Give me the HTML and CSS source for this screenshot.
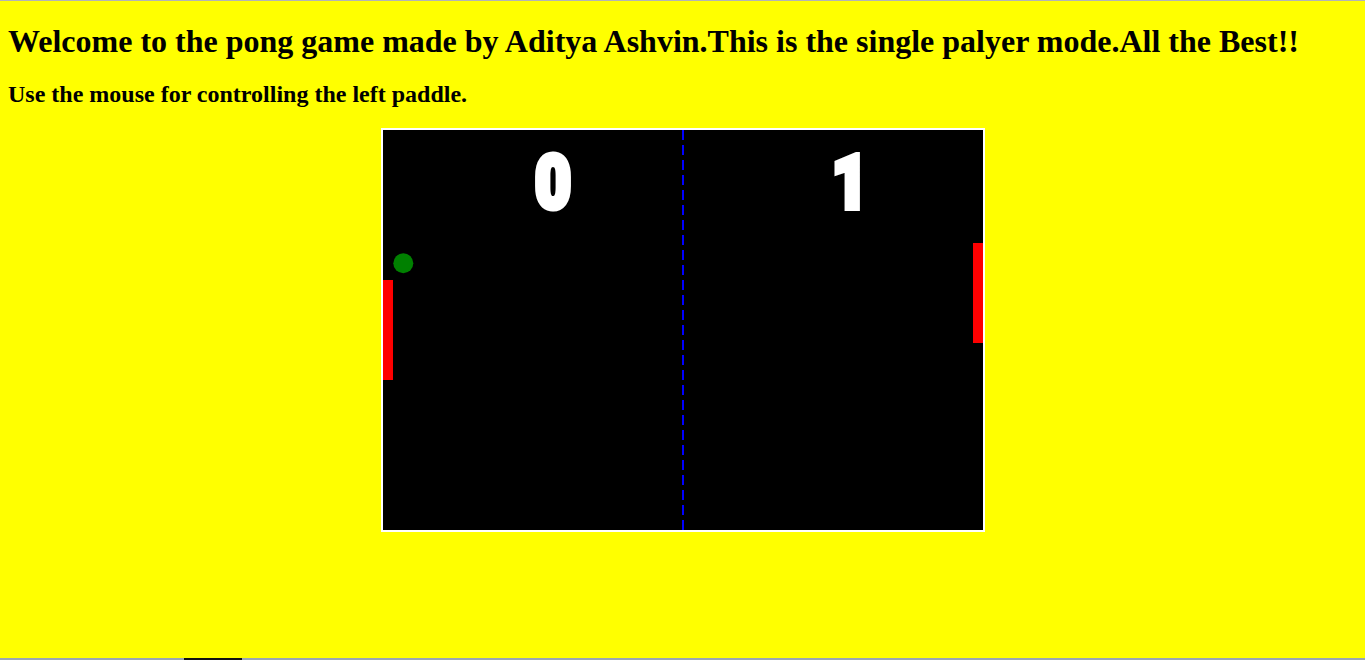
FILE: index.html
```html
<!DOCTYPE html>
<html>
<head>
<meta charset="utf-8">
<title>Pong</title>
<link rel="stylesheet" href="styles.css">
</head>
<body>
<h1 class="title">Welcome to the pong game made by Aditya Ashvin.This is the single palyer mode.All the Best!!</h1>
<h2 class="subtitle">Use the mouse for controlling the left paddle.</h2>
<div class="board">
  <svg class="court" width="600" height="400" viewBox="0 0 600 400">
    <rect x="0" y="0" width="600" height="400" fill="#000"/>
    <line x1="300" y1="0" x2="300" y2="400" stroke="#0000ff" stroke-width="2" stroke-dasharray="10 5"/>
    <g class="score">
      <text transform="translate(152 78) scale(0.84 1)">0</text>
      <text transform="translate(449 78) scale(0.84 1)">1</text>
    </g>
    <rect x="0" y="150" width="10" height="100" fill="#ff0000"/>
    <rect x="590" y="113" width="10" height="100" fill="#ff0000"/>
    <circle cx="20.3" cy="133.3" r="10" fill="#008000"/>
  </svg>
</div>
<div class="edge-top"></div>
<div class="edge-bottom"><span class="edge-tab"></span></div>
</body>
</html>
```
FILE: styles.css
```css
html, body {
  background: #ffff00;
}
body {
  margin: 8px;
  font-family: "Liberation Serif", "Times New Roman", serif;
  color: #000;
}
.title {
  font-size: 32px;
  font-weight: bold;
  margin: 15.44px 0 20.44px;
}
.subtitle {
  font-size: 24px;
  font-weight: bold;
  margin: 20.44px 0 19.92px;
}
.board {
  display: flex;
  justify-content: center;
}
.court {
  display: block;
  border: 2px solid #ffffff;
}
.score text {
  font-family: Roboto, "Liberation Sans", Arial, sans-serif;
  font-weight: 900;
  font-size: 74px;
  fill: #ffffff;
  stroke: #ffffff;
  stroke-width: 6;
  stroke-linejoin: miter;
}
.edge-top {
  position: fixed;
  left: 0;
  right: 0;
  top: 0;
  height: 1px;
  background: #b4b4b4;
}
.edge-bottom {
  position: fixed;
  left: 0;
  right: 0;
  bottom: 0;
  height: 2px;
  background: #9aa6b4;
}
.edge-tab {
  position: absolute;
  left: 184px;
  width: 58px;
  top: 0;
  height: 2px;
  background: #111;
}
```
